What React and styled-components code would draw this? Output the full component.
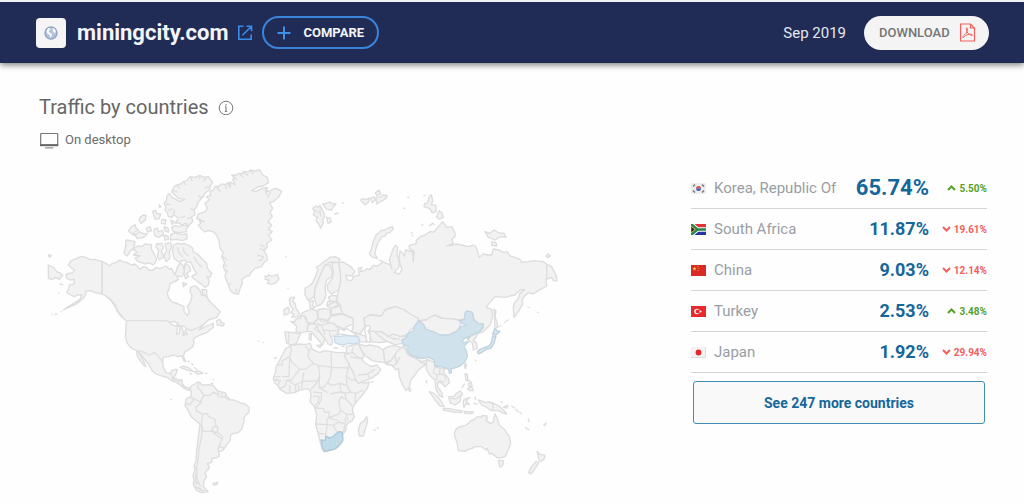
import React from 'react';
import styled, { createGlobalStyle } from 'styled-components';

const GlobalStyle = createGlobalStyle`
  * {
    box-sizing: border-box;
  }

  body {
    margin: 0;
    background: #fefefe;
    color: #5f6368;
    font-family: Roboto, 'Liberation Sans', sans-serif;
  }
`;

const Header = styled.header`
  display: flex;
  align-items: center;
  justify-content: space-between;
  height: 63px;
  padding: 0 35px 0 36px;
  border-top: 2px solid #eef1f6;
  background: #202c55;
  box-shadow: 0 2px 6px rgba(0, 0, 0, 0.5);
`;

const HeaderGroup = styled.div`
  display: flex;
  align-items: center;
  gap: ${props => props.$gap}px;
`;

const Favicon = styled.span`
  display: flex;
  align-items: center;
  justify-content: center;
  width: 30px;
  height: 30px;
  margin-right: 2px;
  border-radius: 4px;
  background: #f5f5f5;
`;

const SiteName = styled.h1`
  margin: 0;
  color: #f4f5f8;
  font-size: 22px;
  font-weight: 700;
  line-height: 28px;
`;

const SiteLink = styled.a`
  display: flex;
  color: #3b8be8;
`;

const CompareButton = styled.button`
  display: flex;
  align-items: center;
  gap: 12px;
  height: 33px;
  padding: 0 13px;
  border: 2px solid #3b84da;
  border-radius: 17px;
  background: transparent;
  color: #f4f5f8;
  font: 700 13px/16px Roboto, sans-serif;
`;

const Period = styled.span`
  color: #e6e8ee;
  font-size: 15px;
  line-height: 20px;
`;

const DownloadButton = styled.button`
  display: flex;
  align-items: center;
  justify-content: space-between;
  width: 125px;
  height: 34px;
  padding: 0 13px 0 15px;
  border: 0;
  border-radius: 17px;
  background: #f4f4f4;
  color: #757575;
  font: 500 13px/16px Roboto, sans-serif;
`;

const Main = styled.main`
  padding: 32px 37px 0 39px;
`;

const TitleRow = styled.div`
  display: flex;
  align-items: center;
  gap: 9px;
`;

const Title = styled.h2`
  margin: 0;
  color: #666;
  font-size: 20px;
  font-weight: 400;
  line-height: 24px;
`;

const Source = styled.p`
  display: flex;
  align-items: center;
  gap: 6px;
  margin: 11px 0 0;
  color: #6c6c6c;
  font-size: 13px;
  line-height: 20px;
`;

const Content = styled.div`
  display: flex;
  align-items: flex-start;
  justify-content: space-between;
  gap: 40px;
  padding: 10px 0 0 1px;
`;

const MapArea = styled.div`
  flex: 1;
  max-width: 530px;

  svg {
    display: block;
    width: 100%;
    height: auto;
  }
`;

const Ranking = styled.aside`
  flex: 0 0 296px;
  padding-top: 8px;
`;

const CountryTable = styled.table`
  width: 100%;
  border-collapse: separate;
  border-spacing: 0;

  th,
  td {
    height: 41px;
    padding: 0;
    border-bottom: 1px solid #d5d5d5;
  }
`;

const NameCell = styled.th`
  color: #999da3;
  font-size: 15px;
  font-weight: 400;
  text-align: left;
`;

const CountryName = styled.span`
  display: flex;
  align-items: center;
  gap: 8px;
  white-space: nowrap;
`;

const ShareCell = styled.td`
  color: #15679a;
  font-size: ${props => (props.$lead ? 22 : 18)}px;
  font-weight: 700;
  line-height: 24px;
  text-align: right;
`;

const ChangeCell = styled.td`
  width: 58px;
  color: ${props => (props.$up ? '#56a02a' : '#f2605f')};
  font-size: 10px;
  font-weight: 700;
`;

const Change = styled.span`
  display: flex;
  align-items: center;
  justify-content: flex-end;
  gap: 3px;
`;

const MoreButton = styled.button`
  display: block;
  width: calc(100% - 4px);
  height: 43px;
  margin: 8px 2px 0;
  border: 1px solid #3f8cb5;
  border-radius: 3px;
  background: #f9f9f9;
  color: #15679a;
  font: 700 14px/20px Roboto, sans-serif;
`;

const MapShape = styled.path`
  fill: ${props => props.$fill || '#f2f2f2'};
  stroke: ${props => props.$stroke || '#dddddd'};
  stroke-width: 4;
  stroke-linejoin: round;
`;

const MapBorder = styled.path`
  fill: none;
  stroke: #dfdfdf;
  stroke-width: 4;
  stroke-linejoin: round;
`;

const countries = [
  {code: 'kr', name: 'Korea, Republic Of', share: '65.74%', change: '5.50%', up: true},
  {code: 'za', name: 'South Africa', share: '11.87%', change: '19.61%', up: false},
  {code: 'cn', name: 'China', share: '9.03%', change: '12.14%', up: false},
  {code: 'tr', name: 'Turkey', share: '2.53%', change: '3.48%', up: true},
  {code: 'jp', name: 'Japan', share: '1.92%', change: '29.94%', up: false}
];

// every region has its own origin, paths are drawn relative to it
const regions = [
  {
    name: 'north-america',
    x: 0,
    y: 0,
    land: [
      'M187,305 165,298 150,299 138,293 125,289 110,295 92,303 85,315 92,322 104,330 98,338 80,342 78,352 90,360 103,358 102,372 88,375 85,388 80,398 92,405 103,410 112,405 125,405 120,418 105,428 85,440 70,450 92,440 112,430 130,415 138,402 136,394 150,392 165,398 187,402Z',
      'M187,305 198,310 210,318 216,310 228,308 240,300 250,306 262,308 275,315 285,312 300,328 310,320 320,322 325,330 340,330 348,322 360,326 378,318 388,328 395,325 405,345 412,322 420,308 428,315 435,335 425,350 410,348 415,358 405,365 390,370 388,385 382,398 385,412 395,425 415,432 432,440 432,455 442,467 448,455 442,440 452,425 456,408 450,395 452,382 462,378 470,380 480,392 485,405 500,408 506,420 515,430 530,445 541,455 530,472 505,480 490,495 478,510 500,498 520,490 520,502 512,508 500,518 480,525 466,532 460,540 462,550 458,560 448,568 435,575 430,588 438,605 432,603 425,588 412,590 400,585 385,590 370,592 368,605 370,622 378,638 390,640 398,630 412,628 408,642 402,650 398,658 408,660 425,660 428,675 435,683 450,685 446,690 440,688 425,678 410,668 395,662 382,652 365,648 345,640 335,630 328,615 315,600 303,583 290,572 275,565 262,550 256,530 258,510 258,500 260,485 250,474 238,462 230,448 222,434 212,420 200,410 187,402Z',
      'M290,572 300,585 310,602 318,620 312,616 300,602 291,587Z',
      'M25,315 40,322 50,335 58,338 68,345 58,358 48,352 35,358 25,355Z M25,284 34,287 28,292Z',
      'M395,95 402,80 410,75 422,72 430,65 440,62 450,50 465,52 480,46 492,52 505,50 518,68 510,78 510,88 495,100 488,112 475,125 470,140 462,150 465,165 455,170 458,185 445,198 438,190 425,195 415,188 405,190 415,175 402,165 395,172 385,170 382,158 375,150 378,140 372,130 380,120 380,110 388,100 396,112 408,118 420,125 435,118 415,115Z',
      'M395,202 405,196 420,200 432,195 445,200 438,208 440,215 420,218 400,215Z',
      'M392,224 405,218 422,224 440,222 442,235 428,242 410,238 392,240Z',
      'M258,240 270,242 285,245 282,262 270,275 262,288 252,280 256,262Z',
      'M280,270 287,262 295,258 305,260 315,252 335,255 334,268 342,280 350,300 340,315 325,308 318,312 295,305 285,295 300,288 280,285 292,276Z',
      'M350,252 365,250 370,262 364,275 372,290 358,300 352,288 356,270 348,262Z M375,252 392,248 395,262 388,275 390,295 378,305 372,288 380,270Z',
      'M400,255 412,250 425,252 432,250 450,258 458,264 460,275 472,282 480,290 490,300 500,310 502,325 515,340 510,352 500,350 508,362 505,375 495,382 480,370 470,362 455,350 470,340 460,325 452,305 440,308 435,300 415,305 402,295 398,275Z',
      'M265,212 275,200 285,194 288,204 296,210 284,216 282,226 272,218Z M285,225 298,215 308,220 322,222 310,232 292,236Z',
      'M300,172 310,165 318,166 316,180 304,190 298,182Z M338,155 346,150 350,160 362,162 358,176 346,178Z M318,205 330,200 335,212 322,216Z',
      'M342,208 352,204 356,216 368,210 370,224 356,232 344,226Z M372,200 384,204 386,216 376,214Z M372,226 384,228 386,238 375,240Z M365,178 378,180 376,192 364,190Z M358,134 363,140 359,142Z M392,180 402,184 396,194Z',
      'M435,310 448,318 452,332 440,340 446,350 436,356 432,340Z M428,368 440,372 430,380Z M486,388 500,390 500,408 488,404Z',
      'M530,482 540,478 543,487 553,490 550,498 532,495Z'
    ],
    borders: [
      'M187,305V402',
      'M260,482H378L392,488 408,490 420,498 440,505 452,512 462,508 480,500 492,492',
      'M290,572 305,575 330,585 345,577 360,595 370,610',
      'M392,640 400,660 M400,655 412,655 M412,665 428,662 M425,680 430,672',
      'M205,412 215,424 226,440 240,462 252,474 M210,416 228,438 232,455 246,472',
      'M412,262 418,280 428,290 M430,262 432,276 446,288 M462,290 470,305 485,322',
      'M34,463 38,463 M44,464 52,462 M62,456 66,454 M55,398 58,400 M58,372 70,374 M100,432 122,422',
      'M412,76 420,86 M432,66 438,76 M452,52 456,64 M480,48 478,58 M500,54 490,64 M508,80 494,84 M486,112 474,108 M398,92 412,96 M378,132 392,134 M384,152 398,146 M400,164 404,150 M462,150 450,146 M420,174 436,168 M456,172 442,176'
    ],
    water: ['M388,488 402,484 415,490 408,498 395,494Z', 'M412,500 420,498 418,520 410,522Z', 'M424,498 436,500 438,512 430,516Z', 'M428,522 440,518 442,522 430,527Z']
  },
  {
    name: 'greenland',
    x: 420,
    y: 0,
    land: [
      'M75,130 88,120 80,110 92,106 90,95 100,90 105,80 118,78 125,72 135,74 145,68 152,78 150,66 165,75 158,58 165,55 155,45 168,46 175,40 185,42 190,35 205,36 210,30 225,33 240,30 248,45 262,52 265,68 250,78 235,80 215,92 228,95 245,86 262,82 260,95 272,92 282,86 290,85 305,95 295,112 280,125 268,128 278,145 270,158 277,170 264,185 275,195 265,208 277,215 265,225 275,240 260,250 262,262 250,270 260,285 262,300 250,310 245,320 225,325 215,335 207,348 200,348 185,358 187,370 182,380 175,403 160,400 150,390 145,375 135,350 138,338 130,320 134,308 125,290 130,278 120,265 118,245 110,225 100,215 85,212 75,216 65,208 55,195 62,190 58,182 72,185 50,175 55,162 75,155 82,145Z',
      'M255,348 262,350 266,344 275,349 292,343 297,357 288,368 275,373 262,370 267,360 256,358Z'
    ],
    borders: ['M160,50 172,60 M178,42 190,52 M190,38 205,46 M212,32 220,42 M110,80 120,95 M135,74 140,88 M140,68 150,84 M255,85 260,105 M272,95 262,115 M240,255 255,260 M238,265 258,272 M232,285 250,290 245,300 234,302 M128,290 142,300 M130,312 142,320 M132,328 144,335 M145,375 152,370 M170,398 168,385 M316,292 320,289 M322,384 326,386']
  },
  {
    name: 'eurasia',
    x: 690,
    y: 60,
    land: [
      'M128,85 138,78 145,82 150,76 160,95 165,110 158,118 160,128 152,145 146,132 138,122 142,112 130,105 134,95Z M158,72 168,70 180,66 185,70 198,72 190,80 185,90 170,88Z M170,112 180,114 184,126 174,130Z M193,102 206,99 M216,70 222,68',
      'M272,60 280,56 290,58 298,54 296,66 286,74 276,66Z M302,54 312,50 316,60 306,68Z M316,38 328,30 332,42 320,46Z M318,52 334,50 340,44 352,48 344,58 330,66 320,72Z',
      'M368,140 370,148 358,158 350,160 345,168 335,170 330,180 325,185 318,205 315,222 322,235 308,232 298,222 305,205 308,190 312,180 318,165 325,160 332,152 345,150 355,144Z',
      'M205,248 220,246 245,262 255,275 245,288 228,285 232,300 245,302 250,290 268,285 265,265 275,262 272,275 284,272 290,266 300,268 310,256 322,258 340,246 328,240 345,248 362,255 366,268 358,240 370,205 376,196 383,202 381,225 390,245 386,262 372,278 388,282 396,268 386,240 390,212 404,228 406,210 428,215 430,245 432,215 418,205 418,196 440,190 438,182 450,170 465,165 480,155 492,156 505,140 518,125 530,142 545,140 555,158 555,170 545,178 550,190 530,198 545,195 560,192 575,195 595,200 608,195 618,200 622,212 628,232 640,222 652,225 665,225 670,207 688,210 700,218 712,215 720,228 735,232 750,238 755,247 775,245 792,242 820,245 830,252 845,260 855,280 860,290 860,303 850,302 845,292 828,298 830,318 812,328 800,335 790,342 775,338 762,350 756,362 758,372 745,395 732,412 730,385 732,370 745,355 750,340 765,328 750,330 735,345 718,348 710,352 675,350 648,382 665,388 668,410 660,435 640,455 628,460 638,445 640,432 625,432 612,420 608,400 597,393 585,400 585,415 570,420 540,416 520,415 495,405 485,416 450,422 425,412 405,395 390,388 375,380 345,390 335,408 300,405 282,415 285,440 270,462 245,455 250,435 248,415 217,400 210,375 198,360 205,335 212,305 210,270Z',
      'M645,155 660,160 672,150 685,158 702,160 708,172 690,170 675,180 655,172Z M665,185 678,188 680,198 665,196Z M828,228 834,222 842,228 834,232Z',
      'M472,70 478,50 484,44 488,62 484,74 498,76 498,95 486,98 480,86 462,80 464,70Z M500,112 508,92 516,100 520,112 508,118Z M412,52 418,52 M400,84 406,86 M422,158 430,160 M424,168 430,166 M454,136 460,134 M476,138 488,130 494,134 M460,46 466,47',
      'M672,388 678,392 675,410 682,430 682,442 674,438 674,415Z',
      'M105,325 118,318 128,308 134,295 140,280 144,268 138,262 150,255 158,248 170,240 180,232 195,230 210,238 205,248 185,245 165,255 155,280 145,300 135,325 132,350 115,362 105,345Z',
      'M165,255 180,255 187,275 185,290 170,300 165,320 168,345 160,365 150,375 140,378 133,350 135,325 145,300 155,275Z',
      'M185,248 205,248 210,270 212,305 205,330 185,342 173,330 172,315 187,295 190,275Z',
      'M118,364 130,362 128,376 136,382 122,388Z',
      'M58,358 64,352 74,352 68,362 76,372 78,385 88,400 85,410 65,412 72,402 62,398 70,388 60,376Z M42,388 55,382 58,392 54,402 42,405Z',
      'M62,424 74,426 76,418 90,414 102,404 112,425 118,440 112,455 95,458 78,455 80,438Z',
      'M45,455 65,457 92,462 85,475 80,490 65,495 50,490 47,475Z',
      'M90,410 98,398 105,395 125,388 140,392 145,415 130,430 112,428 104,408Z',
      'M143,390 160,386 180,388 182,410 172,422 145,415Z',
      'M175,352 185,346 202,348 198,365 205,375 185,385 170,378 172,366 182,364Z',
      'M185,385 210,378 217,400 182,405Z',
      'M182,408 215,402 248,415 250,432 230,440 222,448 212,442 200,438 190,435 172,428Z',
      'M112,440 118,432 140,430 142,440 134,446 155,462 170,478 163,480 158,495 148,483 135,468 125,455 112,455Z',
      'M132,430 145,415 172,422 174,428 190,430 206,445 202,462 190,468 182,470 188,482 184,496 174,492 168,480 155,464 144,448 142,438Z',
      'M118,462 124,460 124,480 118,478Z M140,496 156,494 150,502Z M190,504 204,504 M214,500 224,498',
      'M282,415 300,405 335,408 345,390 375,380 400,388 425,405 445,415 440,435 420,450 410,465 390,470 370,462 355,470 335,455 315,455 300,458 298,440 285,435Z',
      'M298,452 315,455 335,455 355,470 370,462 390,470 412,468 418,482 400,490 375,494 350,484 330,488 306,486 300,470Z',
      'M250,458 272,464 290,470 292,486 270,485 262,470Z'
    ],
    borders: ['M57,458 55,490', 'M145,415 155,425 172,422 M140,430 152,436 174,430 M155,436 160,450 178,452 200,452 M160,450 165,464 M178,452 180,468 M172,376 198,364 M176,362 198,366 M112,428 130,432 M105,410 112,418 M315,455 330,470 350,484 M335,455 345,462 375,480 M370,475 390,478 M830,254V298 M136,90 148,100 M150,86 152,110']
  },
  {
    name: 'south-america',
    x: 270,
    y: 480,
    land: [
      'M180,205 186,196 195,192 202,186 210,187 214,194 225,195 238,194 250,197 262,212 272,215 285,218 290,228 300,240 312,240 330,248 345,252 357,262 358,275 348,285 342,292 341,308 336,326 325,338 312,340 302,345 300,362 290,374 285,382 278,392 265,395 268,408 258,414 245,415 245,428 232,430 238,440 235,448 228,454 225,460 230,470 222,482 220,500 235,515 215,518 200,512 190,494 192,480 189,465 195,450 192,435 198,425 200,390 203,370 205,350 210,312 195,300 185,292 178,280 172,266 165,258 168,240 174,232 182,232 184,218Z',
      'M150,142 160,138 175,143 190,154 176,152Z M194,156 206,153 219,159 204,163Z M178,161 186,162 M225,160 232,161 M248,177 252,180 M174,122 178,128 M184,130 190,136 M192,142 202,150 M242,190 250,192',
      'M249,490 264,487 260,494 252,495Z M121,236 126,240 M384,63 388,64 M398,67 402,68',
      'M158,195 168,202 180,204 180,210 168,208 156,200Z'
    ],
    borders: ['M207,190 202,202 214,214 222,226 215,238 212,248 M182,234 200,240 213,248 M168,252 180,254 190,240 M213,248 198,262 200,274 212,278 218,284 M218,284 214,312 M218,284 230,280 236,290 255,298 258,318 248,322 246,334 220,334 214,312 M246,334 262,338 264,322 258,318 M264,338 278,350 276,358 258,344 246,334 M276,358 266,380 264,394 M266,380 284,384 M222,226 240,226 250,216 262,224 M262,212 266,230 285,232 298,240 M275,215 276,230 M288,220 285,232 M214,312 216,345 208,380 204,420 200,450 202,480 212,500 M194,470 204,474 M192,485 206,490 M196,500 216,508 M194,440 202,450 M205,508 224,512 M196,460 198,496 M200,502 220,514']
  },
  {
    name: 'africa',
    x: 675,
    y: 510,
    land: [
      'M55,70 62,55 70,52 78,45 90,45 105,42 120,44 135,40 140,50 138,56 150,62 165,68 178,62 198,65 215,68 240,68 248,72 252,82 258,95 262,110 268,125 276,138 280,150 285,155 298,160 312,156 308,172 300,185 288,200 275,215 265,228 262,240 268,260 262,272 248,280 243,290 243,300 230,318 233,335 215,355 185,365 172,360 165,335 160,312 152,285 155,255 148,230 135,215 138,195 135,180 125,176 115,178 100,182 90,188 65,190 55,184 45,178 38,166 28,158 25,145 32,125 33,112 38,102 48,82Z',
      'M305,260 308,275 302,292 295,318 283,318 280,300 286,280 298,272Z',
      'M240,70 250,72 262,62 275,68 290,85 298,98 305,102 320,110 335,105 347,118 340,130 318,145 280,160 272,150 268,135 262,122 254,108 248,95 240,82Z',
      'M244,50 280,42 288,58 298,80 290,85 275,80 262,66 250,72 244,64Z',
      'M282,42 300,48 315,45 340,50 355,60 358,85 360,98 335,95 322,92 305,80 290,62Z',
      'M355,58 370,50 385,46 410,52 398,66 390,76 378,92 360,98Z',
      'M398,66 420,52 432,62 420,82 408,100 398,116 390,108 362,102 378,92Z',
      'M316,157 326,155 M326,298 332,302 M336,292 340,296 M26,84 30,84 36,82'
    ],
    borders: ['M34,105 52,105 52,92 60,88 74,80 80,60 76,46 M74,80 80,96 104,118 M74,82 72,140 50,140 M104,118 90,135 80,150 66,150 M104,118 122,118 145,100 160,106 M122,48 132,62 128,80 145,100 M132,62 142,54 M160,106 200,112 M198,66 200,112 250,114 254,100 M160,106 164,136 158,152 150,166 138,178 M200,112 196,140 188,158 M164,136 162,172 188,188 M116,128 112,155 158,152 M112,155 110,178 M92,165 92,186 M100,164 102,182 M75,165 74,188 M66,150 60,168 46,176 M66,150 90,165 112,155 M30,148 46,152 40,164 M26,140 46,140 M28,152 42,152 M188,158 200,166 224,160 245,166 M188,158 176,172 162,172 M250,114 244,140 246,166 M245,140 260,150 275,150 M246,166 256,186 272,190 296,180 M272,190 270,218 M256,186 240,190 228,186 196,192 M224,160 228,186 M240,190 244,208 262,228 M228,200 244,208 M228,200 222,216 226,240 M144,198 162,200 160,216 148,228 M144,186 162,188 170,188 168,212 154,234 M150,234 176,236 180,248 192,246 192,262 M150,282 186,284 186,270 192,262 206,268 220,272 M192,262 206,258 222,252 226,240 246,254 266,252 M160,310 182,312 186,290 186,284 204,286 M182,312 183,330 M204,286 216,306 M204,286 222,276 240,282 236,304 222,306 M244,256 250,272 M240,262 242,278 M255,80 272,84 290,84 M280,135 308,132 330,118 M308,132 314,145 M265,52 260,66']
  },
  {
    name: 'asia-pacific',
    x: 1050,
    y: 420,
    land: [
      'M88,62 110,60 120,52 135,45 150,54 165,55 190,57 210,62 212,72 205,90 175,105 150,105 125,95 108,88Z',
      'M232,116 245,108 265,98 258,112 250,120 260,130 262,145 250,150 247,130Z',
      'M15,165 25,150 40,140 55,165 75,175 95,185 115,178 105,195 85,210 75,225 62,240 58,262 48,272 38,255 28,230 25,205 18,210 8,198 20,190Z',
      'M57,262 63,268 60,275 56,270Z',
      'M110,180 132,185 135,200 150,205 165,205 160,215 175,235 178,248 165,260 155,250 145,245 142,258 155,278 158,292 148,286 138,268 135,240 125,232 115,220 108,205Z',
      'M118,275 128,278 140,288 155,305 162,320 150,318 135,300Z M160,325 175,325 190,328 215,332 215,338 190,336 160,330Z M222,334 250,336 246,341 224,340Z',
      'M176,290 190,290 200,280 210,273 218,282 212,290 210,305 195,315 180,308Z',
      'M222,298 240,292 228,302 238,314 228,310 222,322 219,308Z M254,290 258,300 M250,310 264,312',
      'M225,222 232,222 233,238 240,244 228,242Z M234,252 244,246 246,256 240,260Z M232,266 246,260 250,272 240,272Z M216,264 224,250',
      'M226,190 230,194 226,206 223,198Z M108,240 110,250 M255,183 259,180',
      'M265,300 278,304 285,308 298,306 315,312 330,320 340,330 350,342 335,338 325,332 305,332 290,322 275,315 270,308Z',
      'M340,322 354,316 350,324Z M364,318 375,324 M376,328 386,336 M388,336 396,342 M405,382 418,390 M414,356 418,366 M460,376 470,368 M462,372 468,378 M332,305 338,308',
      'M200,385 210,380 220,378 228,375 238,368 242,362 250,360 262,350 275,352 277,346 290,348 292,355 288,362 302,370 310,366 312,355 315,342 322,355 328,375 338,384 345,390 350,400 358,408 362,430 355,450 345,470 330,474 320,472 305,460 298,462 295,455 292,445 288,450 275,440 255,440 245,446 235,448 225,454 205,452 202,430 195,412 193,400Z',
      'M325,482 340,482 338,496 330,502Z',
      'M441,454 448,462 465,466 462,478 448,486 446,474Z M438,484 445,490 432,510 422,522 416,518 422,504Z'
    ],
    borders: ['M135,200 130,218 142,224 140,240 M150,205 148,220 165,228 168,242 M142,224 160,222 M148,243 164,246 M308,310 310,332 M180,296 200,296 212,285 M75,175 100,176 M88,186 104,190 102,200 M20,190 30,170 M248,122 260,130'],
    highlights: [
      {name: 'China', fill: '#d0e2ec', stroke: '#c3d6e1', d: 'M35,120 50,112 50,103 70,92 75,75 88,62 102,75 108,88 130,95 150,105 175,105 200,95 212,80 230,76 216,70 208,62 224,58 225,40 230,33 243,35 248,40 252,60 265,70 280,72 278,85 268,95 245,105 232,118 236,110 222,116 216,122 222,128 236,124 222,140 230,155 232,170 225,185 210,198 190,205 184,206 184,218 178,220 176,208 165,203 150,200 135,198 132,180 115,172 100,175 80,172 60,165 52,150 55,140 40,135Z'},
      {name: 'Japan', fill: '#dbe9f2', stroke: '#bccfdc', d: 'M262,155 270,148 285,142 298,138 305,125 308,108 318,108 312,130 302,145 290,147 280,154 266,162Z M308,102 312,94 314,84 320,92 330,94 320,103Z'}
    ]
  },
  {
    name: 'inland-seas',
    x: 690,
    y: 60,
    land: [],
    borders: [],
    water: [
      'M204,462 206,450 214,446 222,452 232,446 242,454 256,462 260,468 245,468 225,464Z',
      'M286,440 296,436 302,444 294,452 300,466 300,488 290,484 288,466 284,452Z'
    ]
  },
  {
    name: 'southern-highlights',
    x: 675,
    y: 510,
    land: [],
    borders: [],
    highlights: [
      {name: 'Turkey', fill: '#e0edf6', stroke: '#cbdce7', d: 'M208,20 220,18 226,20 240,16 260,18 280,20 284,38 265,42 250,40 240,44 225,44 210,38Z'},
      {name: 'South Africa', fill: '#c3dce9', stroke: '#aecad9', d: 'M168,330 180,332 183,318 192,324 204,320 212,312 222,305 232,308 234,330 226,342 218,350 208,358 195,360 178,365 172,350Z'}
    ]
  }
];

function WorldMap() {
  return (
    <svg viewBox="0 0 1590 1020" role="img" aria-label="Traffic by countries">
      {regions.map(region => (
        <g key={region.name} transform={`translate(${region.x} ${region.y})`}>
          {region.land.map(d => <MapShape key={d} d={d} />)}
          {region.borders.map(d => <MapBorder key={d} d={d} />)}
          {(region.water || []).map(d => <MapShape key={d} d={d} $fill="#fefefe" />)}
          {(region.highlights || []).map(item => (
            <MapShape key={item.name} d={item.d} $fill={item.fill} $stroke={item.stroke} />
          ))}
        </g>
      ))}
      <circle cx="890" cy="850" r="5" fill="#e3e3e3" stroke="#b5c5ce" strokeWidth="2" />
      <path d="M1366,506 1384,496 M1392,488 1408,478 M1418,470 1425,466 M1462,440 1470,444 M1490,456 1496,458" stroke="#ddd" strokeWidth="3" />
    </svg>
  );
}

const flagArt = {
  kr: (
    <>
      <rect width="15" height="11" fill="#eeeeee" />
      <path d="M5 5.500a2.500 2.500 0 0 1 5 0z" fill="#e5494d" />
      <path d="M5 5.500a2.500 2.500 0 0 0 5 0z" fill="#3569b0" />
      <path d="M2 3.500l2-2M11 1.500l2 2M2 7.500l2 2M11 9.500l2-2" stroke="#777" strokeWidth="1.500" />
    </>
  ),
  za: (
    <>
      <rect width="15" height="5.500" fill="#e0363a" />
      <rect y="5.500" width="15" height="5.500" fill="#2536a0" />
      <path d="M0 0l6.500 5.500L0 11M6 5.500h9" stroke="#fff" strokeWidth="4.500" fill="none" />
      <path d="M0 0l6.500 5.500L0 11M6 5.500h9" stroke="#27864b" strokeWidth="2.500" fill="none" />
      <path d="M0 2l4 3.500L0 9z" fill="#222" stroke="#e3b22f" strokeWidth=".8" />
    </>
  ),
  cn: (
    <>
      <rect width="15" height="11" fill="#d92b25" />
      <path d="M3.500 1.500l.6 1.400 1.500.1-1.200 1 .4 1.500-1.300-.8-1.300.8.4-1.500-1.200-1 1.500-.1z" fill="#f5c842" />
      <path d="M6.500 1.500h1M7.500 3.500h1M6.500 5.500h1" stroke="#f5a042" />
    </>
  ),
  tr: (
    <>
      <rect width="15" height="11" fill="#e92a2c" />
      <circle cx="6" cy="5.500" r="2.800" fill="#fff" />
      <circle cx="6.800" cy="5.500" r="2.100" fill="#e92a2c" />
      <path d="M8 5.500l1.200-.5.7-1 .1 1.200 1.200.3-1.200.4v1.200l-.8-1z" fill="#fff" />
    </>
  ),
  jp: (
    <>
      <rect width="15" height="11" fill="#f3f3f3" />
      <path d="M0 10.500h14.500V0" fill="none" stroke="#ddd" />
      <circle cx="7.500" cy="5.500" r="2.900" fill="#e5262c" />
    </>
  )
};

const Flag = ({code}) => (
  <svg width="15" height="11" viewBox="0 0 15 11" aria-hidden="true">
    {flagArt[code]}
  </svg>
);

const GlobeIcon = () => (
  <svg width="14" height="14" viewBox="0 0 14 14" aria-hidden="true">
    <circle cx="7" cy="7" r="6" fill="#b3c3dc" stroke="#93a4c4" strokeWidth="1.400" />
    <path d="M2.500 4.500L4.500 2l2 .5L6 4 4.500 5l1 1.500 2 1 .5 1.500-1.500 3L5.500 9 3 7zM8.500 2l2.500 1 1 3-1.500 1L9 5.500z" fill="#f8fafd" />
  </svg>
);

const OpenIcon = () => (
  <svg width="16" height="16" viewBox="0 0 16 16" fill="none" stroke="currentColor" strokeWidth="1.600" aria-hidden="true">
    <path d="M6.500 1.300H1.800v12.900h12.400V9.500M9.500 1.300h5v5M14.300 1.500L5.500 10.300" />
  </svg>
);

const PlusIcon = () => (
  <svg width="14" height="14" viewBox="0 0 14 14" aria-hidden="true">
    <path d="M7 .5v13M.5 7h13" stroke="#3f8fe8" strokeWidth="2" />
  </svg>
);

const PdfIcon = () => (
  <svg width="17" height="19" viewBox="0 0 17 19" fill="none" stroke="#f4615c" strokeWidth="1.200" aria-hidden="true">
    <path d="M1.600 1h9.900l4 4v13H1.600zM11.500 1v4h4" />
    <path d="M3.800 14.500c-.8-.7 1.700-2.300 3.500-4.300 1.200-1.500 1.500-5 .6-5.400-1.100-.3-.7 3.400 1 5.300 1.500 1.800 4.700 3 4.600 1.800-.1-1.100-3.600-.6-5.500-.1-2 .6-3.400 3.300-4.200 2.700z" strokeWidth="1" />
  </svg>
);

const InfoIcon = () => (
  <svg width="16" height="16" viewBox="0 0 16 16" fill="none" stroke="#777" aria-hidden="true">
    <circle cx="8" cy="9" r="6.800" />
    <path d="M8 7.500v5M8 5v1.400M7 7.700h1M6.800 12.400h2.400" />
  </svg>
);

const DesktopIcon = () => (
  <svg width="20" height="17" viewBox="0 0 20 17" aria-hidden="true">
    <rect x="1.700" y="1.500" width="17" height="11.500" rx=".5" fill="none" stroke="#777" strokeWidth="1.200" />
    <path d="M1 13.200h18.300" stroke="#666" strokeWidth="2" />
    <path d="M6 15.800h8.500" stroke="#aaa" strokeWidth="1.600" />
  </svg>
);

const Arrow = ({up}) => (
  <svg width="9" height="6" viewBox="0 0 9 6" fill="none" stroke="currentColor" strokeWidth="2" aria-hidden="true">
    <path d={up ? 'M1 5l3.500-3.500L8 5' : 'M1 1l3.500 3.500L8 1'} />
  </svg>
);

export default function App() {
  return (
    <>
      <GlobalStyle />
      <Header>
        <HeaderGroup $gap={9}>
          <Favicon><GlobeIcon /></Favicon>
          <SiteName>miningcity.com</SiteName>
          <SiteLink href="#site" aria-label="Open miningcity.com"><OpenIcon /></SiteLink>
          <CompareButton type="button">
            <PlusIcon />
            COMPARE
          </CompareButton>
        </HeaderGroup>
        <HeaderGroup $gap={18}>
          <Period>Sep 2019</Period>
          <DownloadButton type="button">
            DOWNLOAD
            <PdfIcon />
          </DownloadButton>
        </HeaderGroup>
      </Header>
      <Main>
        <TitleRow>
          <Title>Traffic by countries</Title>
          <InfoIcon />
        </TitleRow>
        <Source>
          <DesktopIcon />
          On desktop
        </Source>
        <Content>
          <MapArea>
            <WorldMap />
          </MapArea>
          <Ranking>
            <CountryTable>
              <tbody>
                {countries.map((country, i) => (
                  <tr key={country.code}>
                    <NameCell scope="row">
                      <CountryName>
                        <Flag code={country.code} />
                        {country.name}
                      </CountryName>
                    </NameCell>
                    <ShareCell $lead={i === 0}>{country.share}</ShareCell>
                    <ChangeCell $up={country.up}>
                      <Change>
                        <Arrow up={country.up} />
                        {country.change}
                      </Change>
                    </ChangeCell>
                  </tr>
                ))}
              </tbody>
            </CountryTable>
            <MoreButton type="button">See 247 more countries</MoreButton>
          </Ranking>
        </Content>
      </Main>
    </>
  );
}
